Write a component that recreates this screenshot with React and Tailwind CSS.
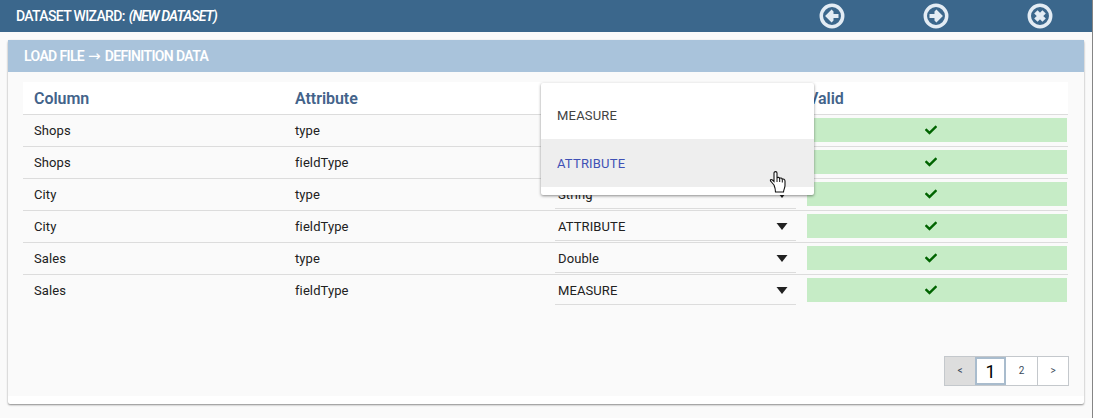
import { FaCheck } from "react-icons/fa";

const rows = [
  ["Shops", "type", "String"],
  ["Shops", "fieldType", "ATTRIBUTE"],
  ["City", "type", "String"],
  ["City", "fieldType", "ATTRIBUTE"],
  ["Sales", "type", "Double"],
  ["Sales", "fieldType", "MEASURE"],
];

const arrow = "M5.6 12 L11.6 6 L13.4 7.8 V10.2 H18 V13.8 H13.4 V16.2 L11.6 18 Z";

function CircleIcon({ kind }) {
  return (
    <svg viewBox="0 0 24 24" className="h-[26px] w-[26px]" fill="#e3ecf4">
      <circle cx="12" cy="12" r="9.9" fill="none" stroke="#e3ecf4" strokeWidth="3.2" />
      {kind === "close" ? (
        <path d="M8.2 8.2 L15.8 15.8 M15.8 8.2 L8.2 15.8" stroke="#e3ecf4" strokeWidth="4.4" />
      ) : (
        <path d={arrow} transform={kind === "next" ? "rotate(180 12 12)" : undefined} />
      )}
    </svg>
  );
}

function Header() {
  return (
    <header className="flex h-8 items-center bg-[#3b678c] pl-4 text-white">
      <h1 className="w-[763px] whitespace-nowrap text-[14px] font-medium tracking-[-0.65px]">
        DATASET WIZARD: <i className="ml-px font-semibold tracking-[-0.93px]">(NEW DATASET)</i>
      </h1>
      <div className="flex w-[312px] shrink-0 gap-[78px] pl-[39.5px]">
        <CircleIcon kind="back" />
        <CircleIcon kind="next" />
        <CircleIcon kind="close" />
      </div>
    </header>
  );
}

function Row({ data: [column, attribute, value] }) {
  return (
    <div className="grid h-8 grid-cols-[261px_261px_261px_262px] border-t border-[#dcdcdc] text-[13px] leading-[31px] tracking-[0.1px] text-[#212121]">
      <span className="pl-[11px]">{column}</span>
      <span className="pl-[11px]">{attribute}</span>
      <div className="ml-[10px] mr-[10px] flex h-[30px] items-center justify-between border-b border-[#dcdcdc] pl-[3px] pr-2">
        <span className="pt-[2px]">{value}</span>
        <svg viewBox="0 0 12 7" className="mt-[2px] h-[7px] w-3" fill="#212121">
          <path d="M0.5 0H11.5L6 7Z" />
        </svg>
      </div>
      <div className="ml-[1px] mr-[1px] mt-[3px] flex h-6 items-center justify-center bg-[#c6ecc6] pb-px pr-3">
        <FaCheck className="h-3 w-3 text-[#006400]" />
      </div>
    </div>
  );
}

function Menu() {
  return (
    <div className="absolute left-[518px] top-px z-10 h-[112px] w-[273px] rounded-[2px] bg-white pt-2 text-[13px] leading-[49px] tracking-[0.2px] shadow-[0_1px_3px_rgba(0,0,0,0.45)]">
      <div className="h-12 px-4 text-[#424242]">MEASURE</div>
      <div className="h-12 bg-[#eeeeee] px-4 text-[#3f51b5]">ATTRIBUTE</div>
      <svg viewBox="0 0 17 22" className="absolute left-[228px] top-[88px] h-[22px] w-[17px]">
        <path
          d="M5 14 L2 10.5 C0.5 9 2 7.8 3.4 9 L5 10.5 V2 C5 0.2 8 0.2 8 2 V7 C8.5 6 10.5 6.2 10.6 7.4 C11.3 6.6 13 7 13.2 8.2 C14.2 7.7 16 8.2 16 10 V14.5 C16 17 14.7 18 14.5 21 H6.5 C6.5 18 5.8 16 5 14Z"
          fill="white"
          stroke="#111"
          strokeWidth="1.1"
        />
        <path d="M8 7V11 M10.7 7.5V11 M13.3 8.5V11.5" stroke="#111" fill="none" />
      </svg>
    </div>
  );
}

export default function App() {
  return (
    <div className="h-[418px] w-[1093px] border-r border-[#858585] bg-[#fafafa] font-['Roboto',sans-serif]">
      <Header />
      <main className="ml-2 mt-2 flex h-[364px] w-[1076px] flex-col rounded-[2px] bg-white shadow-[0_1px_2px_rgba(0,0,0,0.45)]">
        <h2 className="h-8 shrink-0 bg-[#a9c3db] pl-4 text-[14px] font-semibold leading-8 tracking-[-0.63px] text-white">
          LOAD FILE <span className="ml-px mr-[2px] font-['DejaVu_Sans'] text-[15px] font-normal">→</span> DEFINITION DATA
        </h2>
        <div className="flex h-[324px] flex-col bg-[#fafafa] pl-[15px] pr-4 pt-[10px]">
          <div className="relative">
            <div className="grid h-8 grid-cols-[261px_261px_261px_262px] bg-white text-[16px] font-semibold leading-[34px] tracking-[-0.04px] text-[#43638a]">
              <span className="pl-[11px]">Column</span>
              <span className="pl-[11px]">Attribute</span>
              <span className="pl-[11px]">Value</span>
              <span className="pl-[2px]">Valid</span>
            </div>
            {rows.map((data, i) => <Row key={i} data={data} />)}
            <Menu />
          </div>
          <nav className="-mr-px ml-auto mt-[50px] flex h-[30px] w-[125px] border border-[#c4c8cc] bg-white text-center text-[10px] leading-7 text-[#3b4a5c]">
            <span className="w-[30px] bg-[#dddddd]">&lt;</span>
            <span className="w-[31px] border-2 border-[#a9bccd] text-[18px] leading-[26px] text-black">1</span>
            <span className="w-[31px]">2</span>
            <span className="w-[31px] border-l border-[#c4c8cc]">&gt;</span>
          </nav>
        </div>
      </main>
    </div>
  );
}
